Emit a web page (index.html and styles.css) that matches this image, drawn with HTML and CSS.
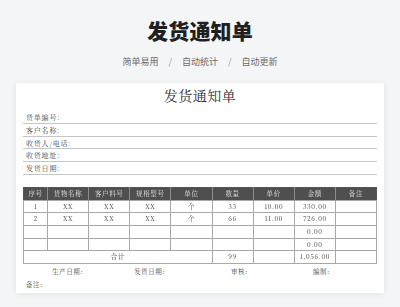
FILE: index.html
```html
<!DOCTYPE html>
<html lang="zh-CN">
<head>
<meta charset="utf-8">
<title>发货通知单</title>
<link rel="stylesheet" href="styles.css">
</head>
<body>
<header class="hero">
  <h1 class="hero-title">发货通知单</h1>
  <p class="hero-tags"><span>简单易用</span><span class="sep">/</span><span>自动统计</span><span class="sep">/</span><span>自动更新</span></p>
</header>
<main class="card">
  <h2 class="doc-title">发货通知单</h2>
  <div class="fields">
    <div class="field">货单编号:</div>
    <div class="field">客户名称:</div>
    <div class="field">收货人/电话:</div>
    <div class="field">收货地址:</div>
    <div class="field">发货日期:</div>
  </div>
  <table class="goods">
    <colgroup><col class="c-idx"><col><col><col><col><col><col><col><col></colgroup>
    <thead>
      <tr><th>序号</th><th>货物名称</th><th>客户料号</th><th>规格型号</th><th>单位</th><th>数量</th><th>单价</th><th>金额</th><th>备注</th></tr>
    </thead>
    <tbody>
      <tr><td>1</td><td>XX</td><td>XX</td><td>XX</td><td>个</td><td>33</td><td>10.00</td><td>330.00</td><td></td></tr>
      <tr><td>2</td><td>XX</td><td>XX</td><td>XX</td><td>个</td><td>66</td><td>11.00</td><td>726.00</td><td></td></tr>
      <tr><td></td><td></td><td></td><td></td><td></td><td></td><td></td><td>0.00</td><td></td></tr>
      <tr><td></td><td></td><td></td><td></td><td></td><td></td><td></td><td>0.00</td><td></td></tr>
      <tr class="total"><td colspan="5">合计</td><td>99</td><td></td><td>1,056.00</td><td></td></tr>
    </tbody>
  </table>
  <div class="signs">
    <span>生产日期:</span><span>发货日期:</span><span>审核:</span><span>编制:</span>
  </div>
  <div class="remark">备注:</div>
</main>
</body>
</html>
```

FILE: styles.css
```css
* { box-sizing: border-box; }
html, body { margin: 0; padding: 0; }
body {
  background: #f4f5f7;
  font-family: "Noto Sans CJK SC", "Noto Sans", sans-serif;
  color: #222;
  height: 307px;
  overflow: hidden;
}
.hero {
  padding-top: 17px;
  text-align: center;
}
.hero-title {
  margin: 0;
  font-size: 21px;
  line-height: 26px;
  font-weight: 900;
  color: #1f1f1f;
  letter-spacing: 0.2px;
}
.hero-tags {
  margin: 14px 0 0;
  font-size: 9px;
  line-height: 10px;
  color: #6a6a6a;
  display: flex;
  justify-content: center;
  gap: 10px;
}
.hero-tags .sep { color: #999; }
.card {
  margin: 16px 16px 0;
  background: #fff;
  box-shadow: 0 1px 6px rgba(0,0,0,0.08);
  padding: 4px 7px 3px;
  font-family: "Noto Serif CJK SC", "Liberation Serif", "Noto Sans CJK SC", serif;
}
.doc-title {
  margin: 0;
  text-align: center;
  font-size: 14px;
  line-height: 16px;
  font-weight: 400;
  letter-spacing: 0.5px;
  color: #333;
}
.fields {
  margin-top: 8px;
}
.field {
  height: 12.8px;
  border-bottom: 1.5px solid #c6c6c6;
  font-size: 7px;
  line-height: 12px;
  padding-left: 3px;
  letter-spacing: 0.8px;
  color: #444;
}
.goods {
  margin-top: 12.5px;
  width: 100%;
  border-collapse: collapse;
  table-layout: fixed;
  border: 1px solid #555;
  font-size: 6.5px;
  will-change: transform;
}
.goods .c-idx { width: 24px; }
.goods th, .goods td {
  height: 12.7px;
  padding: 0;
  text-align: center;
  font-weight: 400;
  line-height: 10px;
  letter-spacing: 0.6px;
}
.goods th {
  background: #4f4f4f;
  color: #e2e2e2;
  border-left: 1.5px solid #8c8c8c;
}
.goods th:first-child { border-left: none; }
.goods td {
  border: 1.5px solid #a8a8a8;
  color: #444;
}
.signs {
  display: grid;
  grid-template-columns: 82px 97px 82px auto;
  padding-left: 29px;
  margin-top: 2px;
  font-size: 6.5px;
  line-height: 10px;
  letter-spacing: 0.6px;
  color: #444;
}
.remark {
  margin-top: 3px;
  padding-left: 3px;
  font-size: 6.5px;
  line-height: 10px;
  letter-spacing: 0.6px;
  color: #444;
}
```
